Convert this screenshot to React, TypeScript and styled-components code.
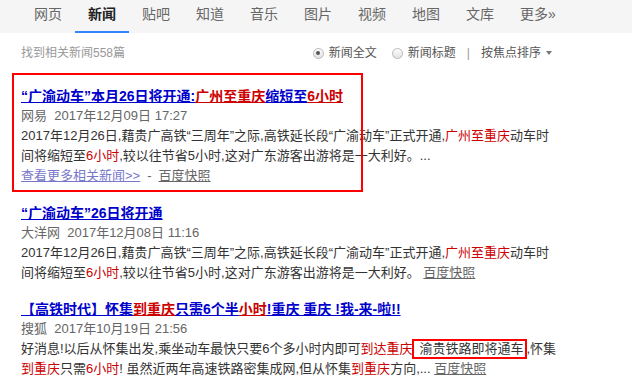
import React from 'react'
import styled, { createGlobalStyle } from 'styled-components'

const GlobalStyle = createGlobalStyle`
  html, body {
    margin: 0;
    padding: 0;
    background: #fff;
  }
  body {
    font-family: "Liberation Sans", Arial, "Noto Sans CJK SC", sans-serif;
    color: #333;
  }
`

/*** NAV ***/
const Nav = styled.nav`
  display: flex;
  height: 33px;
  padding-left: 21px;
  background: #f5f5f5;
`

const NavItem = styled.a<{ $active?: boolean }>`
  box-sizing: border-box;
  height: 33px;
  padding: 4px 13px 0;
  line-height: 20px;
  font-size: 14px;
  color: ${p => (p.$active ? '#222' : '#666')};
  font-weight: ${p => (p.$active ? 'bold' : 'normal')};
  border-bottom: 2px solid ${p => (p.$active ? '#3385ff' : 'transparent')};
  text-decoration: none;
  white-space: nowrap;
`

/*** SUMMARY ROW ***/
const Main = styled.main`
  padding: 0 21px;
`

const Summary = styled.div`
  display: flex;
  align-items: center;
  width: 531px;
  margin-top: 10px;
  line-height: 20px;
  font-size: 12px;
`

const Count = styled.span`
  color: #999;
`

const Tools = styled.div`
  display: flex;
  align-items: center;
  margin-left: auto;
  color: #555;
`

const Option = styled.label`
  display: flex;
  align-items: center;
  margin-left: 15px;
  &:first-child {
    margin-left: 0;
  }
`

const Radio = styled.span<{ $checked?: boolean }>`
  box-sizing: border-box;
  position: relative;
  width: 11px;
  height: 11px;
  margin-right: 5px;
  border: 1px solid #b8b8b8;
  border-radius: 50%;
  background: linear-gradient(#fdfdfd, #e2e2e2);
  &::after {
    content: '';
    display: ${p => (p.$checked ? 'block' : 'none')};
    position: absolute;
    left: 2.5px;
    top: 2.5px;
    width: 4px;
    height: 4px;
    border-radius: 50%;
    background: #555;
  }
`

const Sep = styled.span`
  margin: 0 11px;
  color: #999;
`

const Caret = styled.span`
  width: 0;
  height: 0;
  margin-left: 5px;
  border-left: 3.5px solid transparent;
  border-right: 3.5px solid transparent;
  border-top: 4px solid #777;
`

/*** RESULTS ***/
const Results = styled.div`
  margin-top: 23px;
`

const Result = styled.div`
  position: relative;
  width: 538px;
  margin-bottom: 16.5px;
`

const Title = styled.a`
  display: block;
  line-height: 20px;
  font-size: 14px;
  font-weight: bold;
  color: #00c;
  text-decoration: underline;
  white-space: nowrap;
`

const Em = styled.span`
  color: #c00;
  text-decoration: underline;
`

const Meta = styled.div`
  line-height: 20px;
  font-size: 13px;
  color: #666;
`

const Abstract = styled.div`
  line-height: 20px;
  font-size: 13px;
  color: #333;
`

const Red = styled.span`
  color: #c00;
`

const Mark = styled.span`
  padding: 0 1px 1px 5px;
  border: 2px solid #f00;
`

const MoreLink = styled.a`
  color: #77c;
  text-decoration: underline;
`

const Dash = styled.span`
  margin: 0 7px;
  color: #666;
`

const Snapshot = styled.a`
  color: #666;
  text-decoration: underline;
`

const Highlight = styled.div`
  position: absolute;
  left: -9px;
  top: -13px;
  width: 351px;
  height: 119px;
  box-sizing: border-box;
  border: 2px solid #f00;
  pointer-events: none;
`

const navItems = ['网页', '新闻', '贴吧', '知道', '音乐', '图片', '视频', '地图', '文库', '更多»']

export default function App() {
  return (
    <>
      <GlobalStyle />
      <Nav>
        {navItems.map(item => (
          <NavItem key={item} $active={item === '新闻'}>{item}</NavItem>
        ))}
      </Nav>

      <Main>
        <Summary>
          <Count>找到相关新闻558篇</Count>
          <Tools>
            <Option><Radio $checked />新闻全文</Option>
            <Option><Radio />新闻标题</Option>
            <Sep>|</Sep>
            <span>按焦点排序</span>
            <Caret />
          </Tools>
        </Summary>

        <Results>
          <Result>
            <Title>“广渝动车”本月26日将开通:<Em>广州至重庆</Em>缩短至<Em>6小时</Em></Title>
            <Meta>网易&nbsp;&nbsp;2017年12月09日 17:27</Meta>
            <Abstract>
              2017年12月26日,藉贵广高铁“三周年”之际,高铁延长段“广渝动车”正式开通,<Red>广州至重庆</Red>动车时间将缩短至<Red>6小时</Red>,较以往节省5小时,这对广东游客出游将是一大利好。...
            </Abstract>
            <Abstract>
              <MoreLink>查看更多相关新闻&gt;&gt;</MoreLink>
              <Dash>-</Dash>
              <Snapshot>百度快照</Snapshot>
            </Abstract>
            <Highlight />
          </Result>

          <Result>
            <Title>“广渝动车”26日将开通</Title>
            <Meta>大洋网&nbsp;&nbsp;2017年12月08日 11:16</Meta>
            <Abstract>
              2017年12月26日,藉贵广高铁“三周年”之际,高铁延长段“广渝动车”正式开通,<Red>广州至重庆</Red>动车时间将缩短至<Red>6小时</Red>,较以往节省5小时,这对广东游客出游将是一大利好。 <Snapshot>百度快照</Snapshot>
            </Abstract>
          </Result>

          <Result>
            <Title>【高铁时代】怀集<Em>到重庆</Em>只需6个半<Em>小时</Em>!重庆 重庆 !我-来-啦!!</Title>
            <Meta>搜狐&nbsp;&nbsp;2017年10月19日 21:56</Meta>
            <Abstract>
              好消息!以后从怀集出发,乘坐动车最快只要6个多小时内即可<Red>到达重庆</Red><Mark>渝贵铁路即将通车</Mark>,怀集<Red>到重庆</Red>只需<Red>6小时</Red>! 虽然近两年高速铁路密集成网,但从怀集<Red>到重庆</Red>方向,... <Snapshot>百度快照</Snapshot>
            </Abstract>
          </Result>
        </Results>
      </Main>
    </>
  )
}
